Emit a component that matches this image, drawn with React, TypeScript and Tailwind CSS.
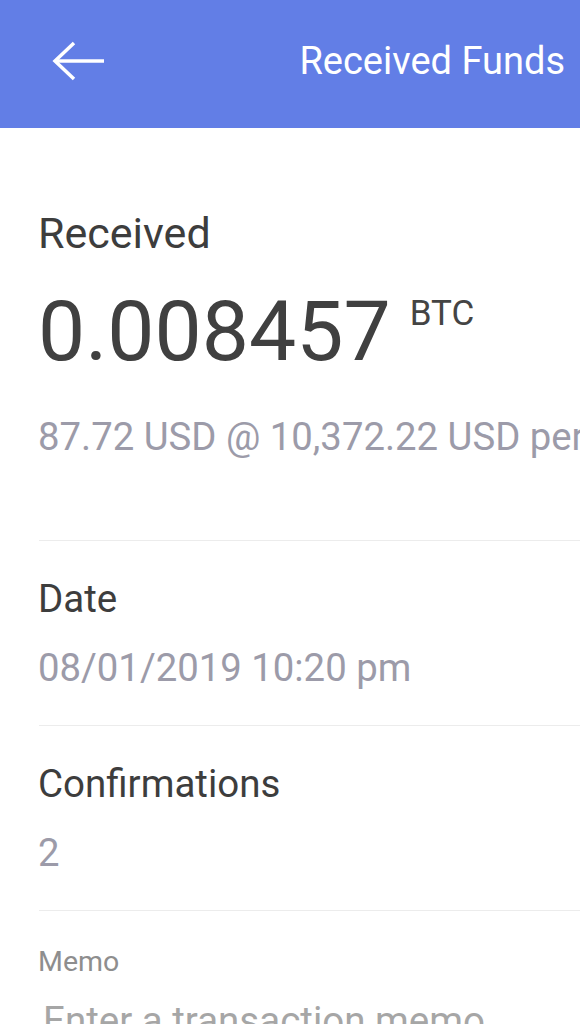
export default function App() {
  const rows = [
    { label: 'Date', value: '08/01/2019 10:20 pm' },
    { label: 'Confirmations', value: '2' },
  ];

  return (
    <div className="min-h-screen w-full overflow-hidden bg-white font-['Roboto',sans-serif]">
      <header className="h-[128px] bg-[#627ee6] flex items-center justify-between pl-[52px] pr-[15px] pb-[7px]">
        <svg width="52" height="40" viewBox="0 0 52 40" fill="none" stroke="white" strokeWidth="3.5">
          <path d="M3 20H52" />
          <path d="M22 2L3 20L22 38" strokeLinejoin="miter" />
        </svg>
        <h1 className="text-[38px] leading-none text-white whitespace-nowrap">Received Funds</h1>
      </header>

      <main>
        <section className="pl-[38px] pt-[80px] pb-[81px]">
          <p className="text-[43px] leading-[50px] text-[#3d3d3d]">Received</p>
          <div className="mt-[24px] flex items-start">
            <span className="text-[84px] leading-[100px] text-[#404040]">0.008457</span>
            <span className="ml-[19px] mt-[14px] text-[35px] leading-none text-[#444444]">BTC</span>
          </div>
          <p className="mt-[33px] text-[38.3px] leading-[44px] text-[#9c9ba9] whitespace-nowrap">
            87.72 USD @ 10,372.22 USD per BTC
          </p>
        </section>

        {rows.map((row) => (
          <div key={row.label}>
            <div className="ml-[39px] h-px bg-[#ececec]" />
            <div className="pl-[38px] pt-[36px] pb-[35px]">
              <p className="text-[38.5px] leading-[44px] text-[#3d3d3d]">{row.label}</p>
              <p className="mt-[25px] text-[38.3px] leading-[44px] text-[#9c9ba9] whitespace-nowrap">{row.value}</p>
            </div>
          </div>
        ))}

        <div className="ml-[39px] h-px bg-[#ececec]" />
        <div className="pl-[38px] pt-[35px]">
          <label className="block text-[28.5px] leading-[32px] text-[#8e8e8e]">Memo</label>
          <input
            className="mt-[21px] ml-[5px] w-[520px] bg-transparent outline-none border-none p-0 text-[38.5px] leading-[44px] h-[44px] text-[#404040] placeholder:text-[#a6a6a6]"
            placeholder="Enter a transaction memo"
          />
        </div>
      </main>
    </div>
  );
}
